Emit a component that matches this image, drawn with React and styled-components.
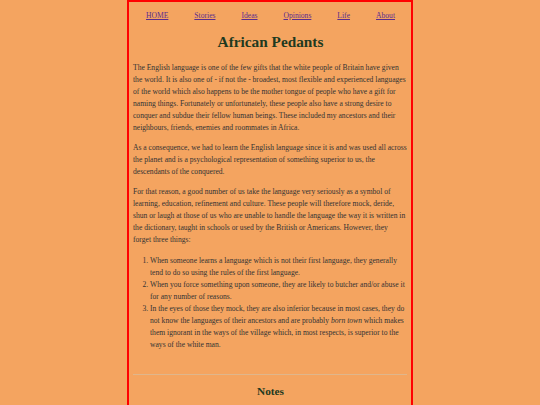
import React from 'react';
import styled, { createGlobalStyle } from 'styled-components';

const GlobalStyle = createGlobalStyle`
  html, body {
    margin: 0;
    padding: 0;
    background: #f4a460;
  }
  body {
    font-family: "Liberation Serif", "Times New Roman", serif;
    font-size: 7.6px;
    color: #333;
  }
`;

const Page = styled.div`
  box-sizing: border-box;
  width: 286px;
  min-height: 420px;
  margin: 0 auto;
  border: 2px solid #ff0000;
  padding: 0 3px 20px 4px;
`;

const Nav = styled.nav`
  display: flex;
  justify-content: center;
  gap: 26px;
  padding-top: 8px;
  font-size: 7.6px;
  line-height: 12px;
  a {
    color: #5b2d8e;
    text-decoration: underline;
  }
`;

const Title = styled.h1`
  margin: 11px 0;
  text-align: center;
  font-size: 15.3px;
  line-height: 18px;
  font-weight: bold;
  color: #1f3a1f;
`;

const Para = styled.p`
  margin: 8px 0;
  line-height: 12px;
`;

const List = styled.ol`
  margin: 9px 0 0;
  padding-left: 17px;
  line-height: 12px;
`;

const Rule = styled.hr`
  border: none;
  border-top: 1px solid #dfb68c;
  margin: 23px 1px 0 0;
`;

const SubTitle = styled.h2`
  margin: 9px 0;
  text-align: center;
  font-size: 11.3px;
  line-height: 14px;
  font-weight: bold;
  color: #1f3a1f;
`;

const links = ['HOME', 'Stories', 'Ideas', 'Opinions', 'Life', 'About'];

export default function App() {
  return (
    <>
      <GlobalStyle />
      <Page>
        <Nav>
          {links.map((l) => (
            <a key={l} href="#">{l}</a>
          ))}
        </Nav>
        <Title>African Pedants</Title>
        <Para>
          The English language is one of the few gifts that the white people of Britain have given
          the world. It is also one of - if not the - broadest, most flexible and experienced languages
          of the world which also happens to be the mother tongue of people who have a gift for
          naming things. Fortunately or unfortunately, these people also have a strong desire to
          conquer and subdue their fellow human beings. These included my ancestors and their
          neighbours, friends, enemies and roommates in Africa.
        </Para>
        <Para>
          As a consequence, we had to learn the English language since it is and was used all across
          the planet and is a psychological representation of something superior to us, the
          descendants of the conquered.
        </Para>
        <Para>
          For that reason, a good number of us take the language very seriously as a symbol of
          learning, education, refinement and culture. These people will therefore mock, deride,
          shun or laugh at those of us who are unable to handle the language the way it is written in
          the dictionary, taught in schools or used by the British or Americans. However, they
          <br />
          forget three things:
        </Para>
        <List>
          <li>
            When someone learns a language which is not their first language, they generally
            tend to do so using the rules of the first language.
          </li>
          <li>
            When you force something upon someone, they are likely to butcher and/or abuse it
            for any number of reasons.
          </li>
          <li>
            In the eyes of those they mock, they are also inferior because in most cases, they do
            not know the languages of their ancestors and are probably <em>born town</em> which makes
            them ignorant in the ways of the village which, in most respects, is superior to the
            ways of the white man.
          </li>
        </List>
        <Rule />
        <SubTitle>Notes</SubTitle>
      </Page>
    </>
  );
}
